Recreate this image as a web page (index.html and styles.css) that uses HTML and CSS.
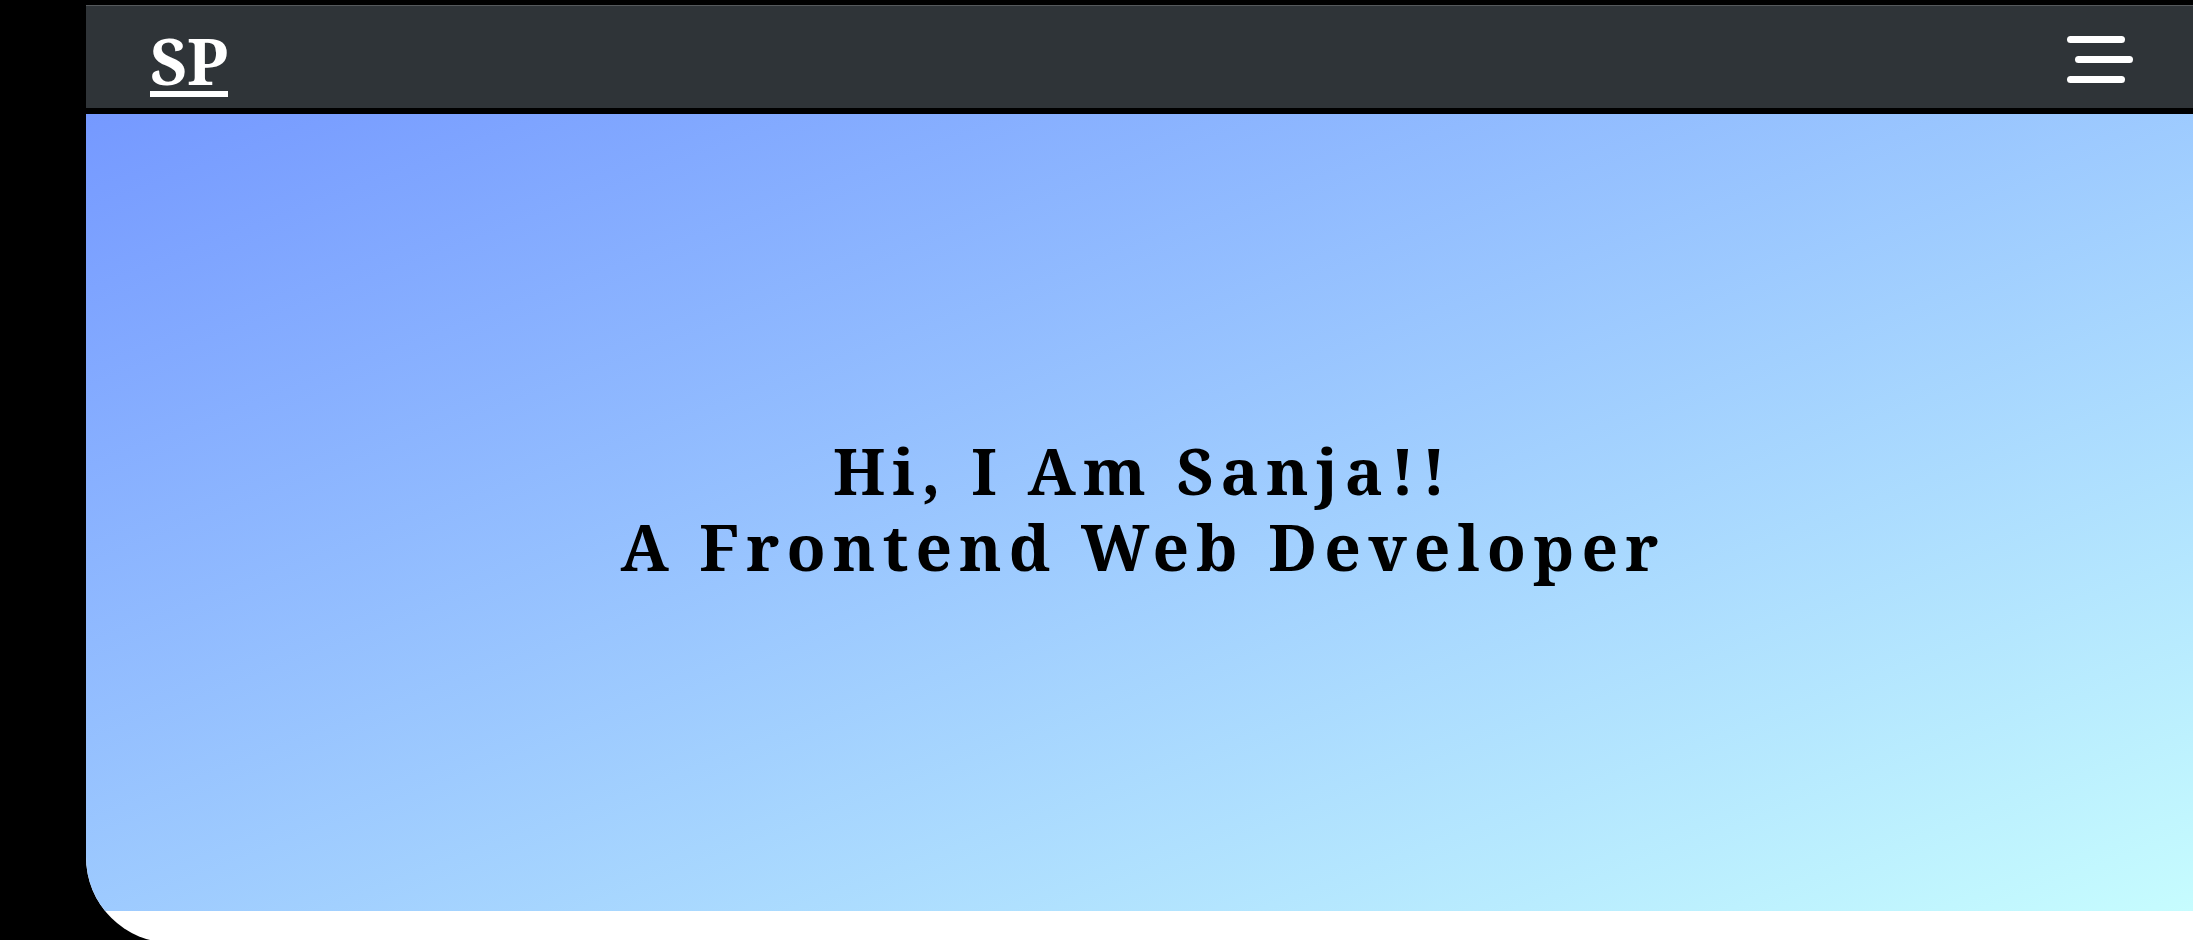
FILE: index.html
```html
<!DOCTYPE html>
<html lang="en">
<head>
<meta charset="utf-8">
<title>Sanja</title>
<link rel="stylesheet" href="styles.css">
</head>
<body>
<div class="page">
  <header class="nav">
    <a class="logo" href="#">SP</a>
    <button class="burger" aria-label="Menu">
      <span class="bar"></span>
      <span class="bar bar-mid"></span>
      <span class="bar"></span>
    </button>
  </header>
  <section class="hero">
    <h1 class="hero-title">Hi, I Am Sanja!!<br>A Frontend Web Developer</h1>
  </section>
</div>
</body>
</html>
```

FILE: styles.css
```css
html, body {
  margin: 0;
  padding: 0;
  background: #000;
  overflow: hidden;
}
body {
  font-family: "Noto Serif", "DejaVu Serif", serif;
}
.page {
  margin: 5px 0 0 86px;
  height: 938px;
  background: #fff;
  border-bottom-left-radius: 86px;
  overflow: hidden;
  display: flex;
  flex-direction: column;
}
.nav {
  height: 102px;
  flex: none;
  background: #2f3438;
  border-top: 1px solid #55595c;
  border-bottom: 6px solid #000;
  display: flex;
  align-items: center;
  justify-content: space-between;
  padding: 0 60px 0 64px;
}
.logo {
  color: #fff;
  text-decoration: none;
  font-weight: bold;
  font-size: 64px;
  line-height: 50px;
  padding-bottom: 5px;
  border-bottom: 6px solid #fff;
  margin-top: 19px;
}
.burger {
  background: none;
  border: 0;
  padding: 0;
  width: 66px;
  display: flex;
  flex-direction: column;
  gap: 13px;
  margin-top: 5px;
}
.bar {
  display: block;
  width: 58px;
  height: 7px;
  border-radius: 4px;
  background: #fff;
}
.bar-mid {
  margin-left: 8px;
}
.hero {
  height: 797px;
  flex: none;
  background: linear-gradient(to bottom right, #7599ff, #c6fcfe);
  display: flex;
  align-items: center;
  justify-content: center;
}
.hero-title {
  margin: 0 0 8px;
  padding-left: 7px;
  text-align: center;
  font-weight: bold;
  font-size: 64px;
  line-height: 76px;
  letter-spacing: 7px;
  color: #000;
}
```
